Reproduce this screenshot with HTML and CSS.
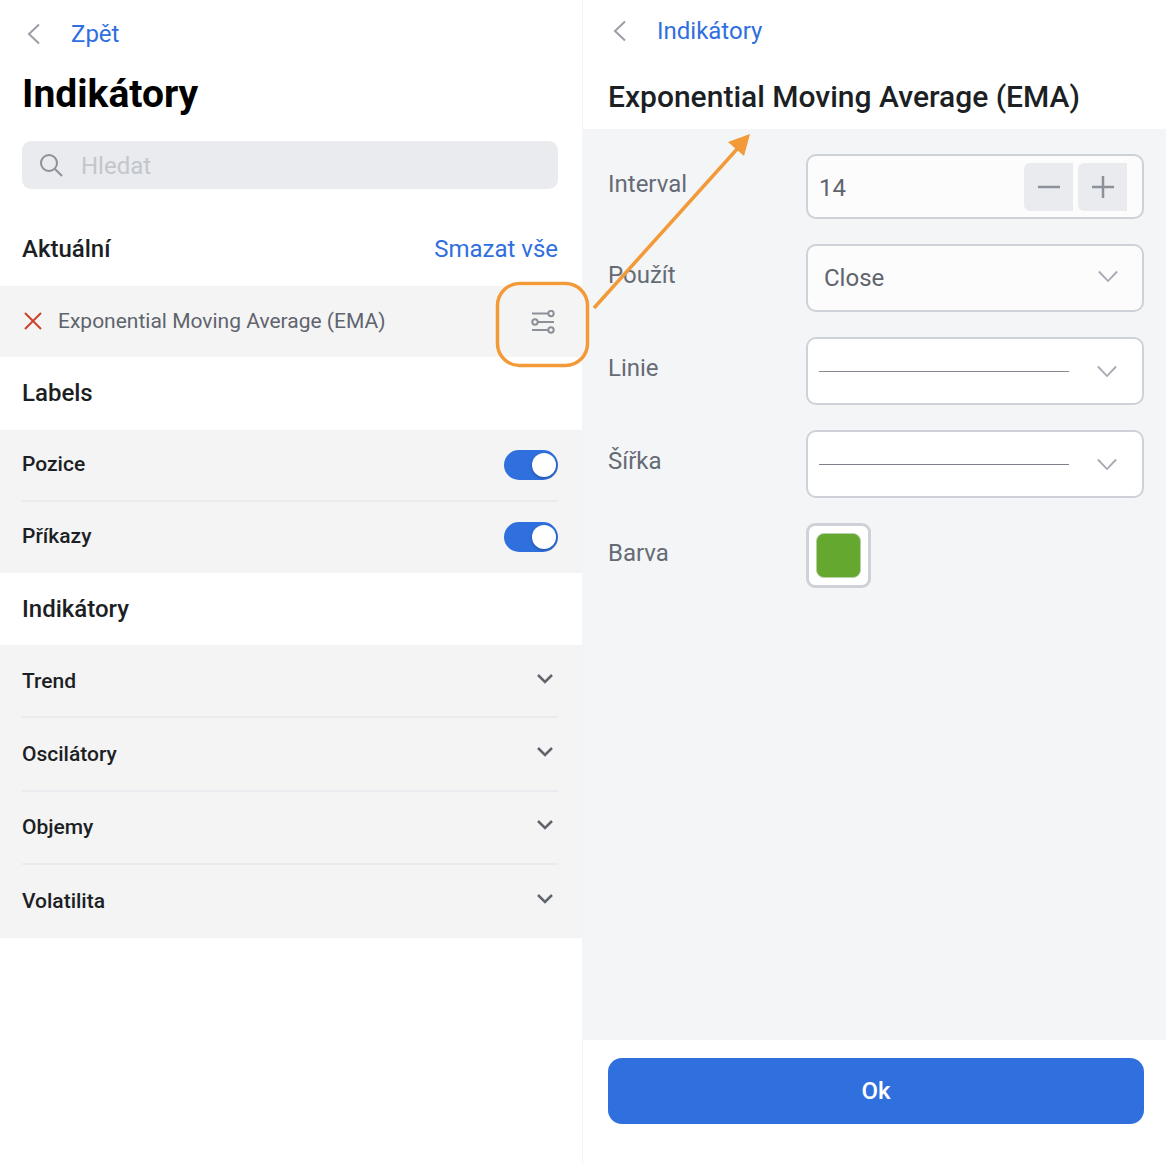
FILE: index.html
```html
<!DOCTYPE html>
<html lang="cs">
<head>
<meta charset="utf-8">
<title>Indikátory</title>
<link rel="stylesheet" href="styles.css">
</head>
<body>
<div class="page">
  <section class="left">
    <div class="back back-left">
      <svg class="back-icon" viewBox="0 0 14 22"><path d="M12 1.500 L2 11 L12 20.500"/></svg>
      <span class="link">Zpět</span>
    </div>
    <h1 class="title">Indikátory</h1>
    <div class="search">
      <svg class="search-icon" viewBox="0 0 24 24"><circle cx="10" cy="10" r="8"/><path d="M16 16 L23 23"/></svg>
      <span class="search-text">Hledat</span>
    </div>
    <div class="heading heading-current">
      <span>Aktuální</span>
      <span class="link">Smazat vše</span>
    </div>
    <div class="current-row">
      <svg class="x-icon" viewBox="0 0 20 20"><path d="M2 2 L18 18 M18 2 L2 18"/></svg>
      <span class="current-name">Exponential Moving Average (EMA)</span>
      <svg class="sliders" viewBox="0 0 24 24">
        <path d="M1 3.500 H17 M7 12 H23 M1 20 H17"/>
        <circle cx="20" cy="3.500" r="2.700"/><circle cx="4" cy="12" r="2.700"/><circle cx="20" cy="20" r="2.700"/>
      </svg>
    </div>
    <div class="heading heading-labels">Labels</div>
    <div class="group">
      <div class="row row-toggle"><span class="toggle-name">Pozice</span><span class="toggle"></span></div>
      <div class="row row-toggle row-last"><span class="toggle-name">Příkazy</span><span class="toggle"></span></div>
    </div>
    <div class="heading">Indikátory</div>
    <div class="group">
      <div class="row"><span>Trend</span><svg class="row-chevron" viewBox="0 0 18 12"><path d="M2 2 L9 9 L16 2"/></svg></div>
      <div class="row"><span>Oscilátory</span><svg class="row-chevron" viewBox="0 0 18 12"><path d="M2 2 L9 9 L16 2"/></svg></div>
      <div class="row"><span>Objemy</span><svg class="row-chevron" viewBox="0 0 18 12"><path d="M2 2 L9 9 L16 2"/></svg></div>
      <div class="row row-last"><span>Volatilita</span><svg class="row-chevron" viewBox="0 0 18 12"><path d="M2 2 L9 9 L16 2"/></svg></div>
    </div>
  </section>

  <section class="right">
    <header class="right-head">
      <div class="back back-right">
        <svg class="back-icon" viewBox="0 0 14 22"><path d="M12 1.500 L2 11 L12 20.500"/></svg>
        <span class="link">Indikátory</span>
      </div>
      <h2 class="subtitle">Exponential Moving Average (EMA)</h2>
    </header>
    <div class="form">
      <div class="field field-interval">
        <span class="label">Interval</span>
        <div class="control stepper">
          <span class="value value-num">14</span>
          <span class="step step-minus"><svg viewBox="0 0 22 22"><path d="M0 11 H22"/></svg></span>
          <span class="step"><svg viewBox="0 0 22 22"><path d="M0 11 H22 M11 0 V22"/></svg></span>
        </div>
      </div>
      <div class="field">
        <span class="label">Použít</span>
        <div class="control select select-text">
          <span class="value">Close</span>
          <svg class="select-chevron" viewBox="0 0 22 14"><path d="M1 1.500 L11 12 L21 1.500"/></svg>
        </div>
      </div>
      <div class="field">
        <span class="label">Linie</span>
        <div class="control select">
          <span class="line line-thick"></span>
          <svg class="select-chevron" viewBox="0 0 22 14"><path d="M1 1.500 L11 12 L21 1.500"/></svg>
        </div>
      </div>
      <div class="field">
        <span class="label">Šířka</span>
        <div class="control select">
          <span class="line"></span>
          <svg class="select-chevron" viewBox="0 0 22 14"><path d="M1 1.500 L11 12 L21 1.500"/></svg>
        </div>
      </div>
      <div class="field field-color">
        <span class="label">Barva</span>
        <div class="swatch"><span class="swatch-fill"></span></div>
      </div>
    </div>
    <footer class="footer"><button class="ok">Ok</button></footer>
  </section>

  <svg class="annotation" viewBox="0 0 1166 1164">
    <rect x="497.500" y="283.500" width="90" height="82" rx="22"/>
    <path d="M594 308 L738 148"/>
    <polygon class="arrow-head" points="750,134 744,156 728,142"/>
  </svg>
</div>
</body>
</html>
```

FILE: styles.css
```css
* { box-sizing: border-box; }
html, body { margin: 0; padding: 0; background: #fff; }
body { font-family: Roboto, "Liberation Sans", sans-serif; color: #1c1f24; }

.page { position: relative; display: flex; width: 1166px; height: 1164px; overflow: hidden; }
.left { width: 582px; flex: none; }
.right { flex: 1; display: flex; flex-direction: column; border-left: 1px solid #f4f5f7; }

.link { color: #2f6fde; font-size: 24px; }
.back { display: flex; align-items: center; }
.back-icon { width: 14px; height: 22px; fill: none; stroke: #9a9ea6; stroke-width: 2; }
.back-left { height: 44px; margin-top: 12px; padding-left: 27px; gap: 30px; }
.back-right { height: 44px; margin-top: 9px; padding-left: 30px; gap: 30px; }

.title { margin: 13px 0 0 22px; font-size: 39px; line-height: 50px; font-weight: 700; color: #000; }

.search { display: flex; align-items: center; gap: 18px; height: 48px; margin: 22px 24px 0 22px; padding-left: 17px; background: #e9ebef; border-radius: 9px; font-size: 24px; color: #c3c6cc; }
.search-icon { width: 24px; height: 24px; fill: none; stroke: #8c9099; stroke-width: 2; }
.search-text { margin-top: 2px; }

.heading { display: flex; justify-content: space-between; align-items: center; height: 72px; padding: 0 24px 0 22px; font-size: 24px; font-weight: 500; color: #1c1f24; }
.heading .link { font-weight: 400; }
.heading-current { height: 73px; margin-top: 24px; padding-bottom: 2px; }
.heading-labels { height: 73px; padding-bottom: 2px; }

.current-row { display: flex; align-items: center; height: 71px; padding: 0 27px 0 23px; background: #f4f4f5; }
.x-icon { width: 20px; height: 20px; margin-bottom: 1px; fill: none; stroke: #c8432a; stroke-width: 2; }
.current-name { flex: 1; margin: 0 0 2px 15px; font-size: 21px; color: #5f646d; }
.sliders { width: 24px; height: 24px; fill: none; stroke: #8c9099; stroke-width: 2; }

.group { background: #f4f4f5; padding: 0 24px 0 22px; }
.row { display: flex; justify-content: space-between; align-items: center; height: 73.250px; padding-right: 4px; border-bottom: 2px solid #e9ebef; font-size: 21px; font-weight: 500; color: #1c1f24; }
.row-toggle { height: 71.500px; padding-right: 0; }
.row-last { border-bottom: 0; }
.toggle-name { margin-bottom: 2px; }
.row-chevron { width: 18px; height: 12px; margin-bottom: 4px; fill: none; stroke: #5f646d; stroke-width: 2.500; }

.toggle { position: relative; width: 54px; height: 30px; border-radius: 15px; background: #2f6fde; }
.toggle::after { content: ""; position: absolute; top: 3px; right: 2px; width: 24px; height: 24px; border-radius: 50%; background: #fff; box-shadow: 0 1px 3px rgba(0, 0, 0, .3); }

.right-head { height: 129px; }
.subtitle { margin: 22px 0 0 25px; font-size: 30px; line-height: 44px; font-weight: 500; color: #1c1f24; }

.form { flex: 1; background: #f4f5f7; padding: 25px 22px 0 25px; }
.field { display: flex; align-items: flex-start; margin-bottom: 25px; }
.label { width: 198px; flex: none; padding-top: 16px; font-size: 24px; line-height: 30px; color: #656b75; }
.field-interval .label { padding-top: 15px; }
.field-color .label { padding-top: 15px; }
.control { flex: 1; display: flex; align-items: center; height: 68px; background: #fff; border: 2px solid #cfd1d8; border-radius: 10px; }
.value { flex: 1; font-size: 24px; color: #5f646d; }
.value-num { padding-top: 3px; }

.stepper { height: 65px; padding: 0 15px 0 11px; gap: 5px; background: #fcfcfd; }
.step { display: flex; align-items: center; justify-content: center; width: 49px; height: 48px; background: #e9ebef; border-radius: 6px 0 0 6px; }
.step svg { width: 22px; height: 22px; fill: none; stroke: #8c9099; stroke-width: 2.500; }

.select { padding: 0 25px 0 11px; gap: 28px; }
.select-text { padding: 0 24px 0 16px; background: #fcfcfd; }
.select-text .select-chevron { margin-bottom: 4px; }
.line { flex: 1; height: 1px; background: #7c8089; }
.line-thick { background: #858991; }
.select-chevron { width: 20px; height: 13px; fill: none; stroke: #a6a9b1; stroke-width: 2; }

.swatch { width: 65px; height: 65px; padding: 7px; background: #fff; border: 3px solid #cfd1d8; border-radius: 9px; }
.swatch-fill { display: block; width: 100%; height: 100%; background: #65a830; border: 1px solid #b9cfa8; border-radius: 8px; }

.footer { height: 124px; padding: 18px 22px 0 25px; background: #fff; }
.ok { display: block; width: 100%; height: 66px; border: 0; border-radius: 14px; background: #2f6fde; color: #fff; font-family: inherit; font-size: 24px; font-weight: 500; }

.annotation { position: absolute; inset: 0; width: 1166px; height: 1164px; pointer-events: none; fill: none; stroke: #f29a38; stroke-width: 3.500; }
.arrow-head { fill: #f29a38; stroke: none; }
```
